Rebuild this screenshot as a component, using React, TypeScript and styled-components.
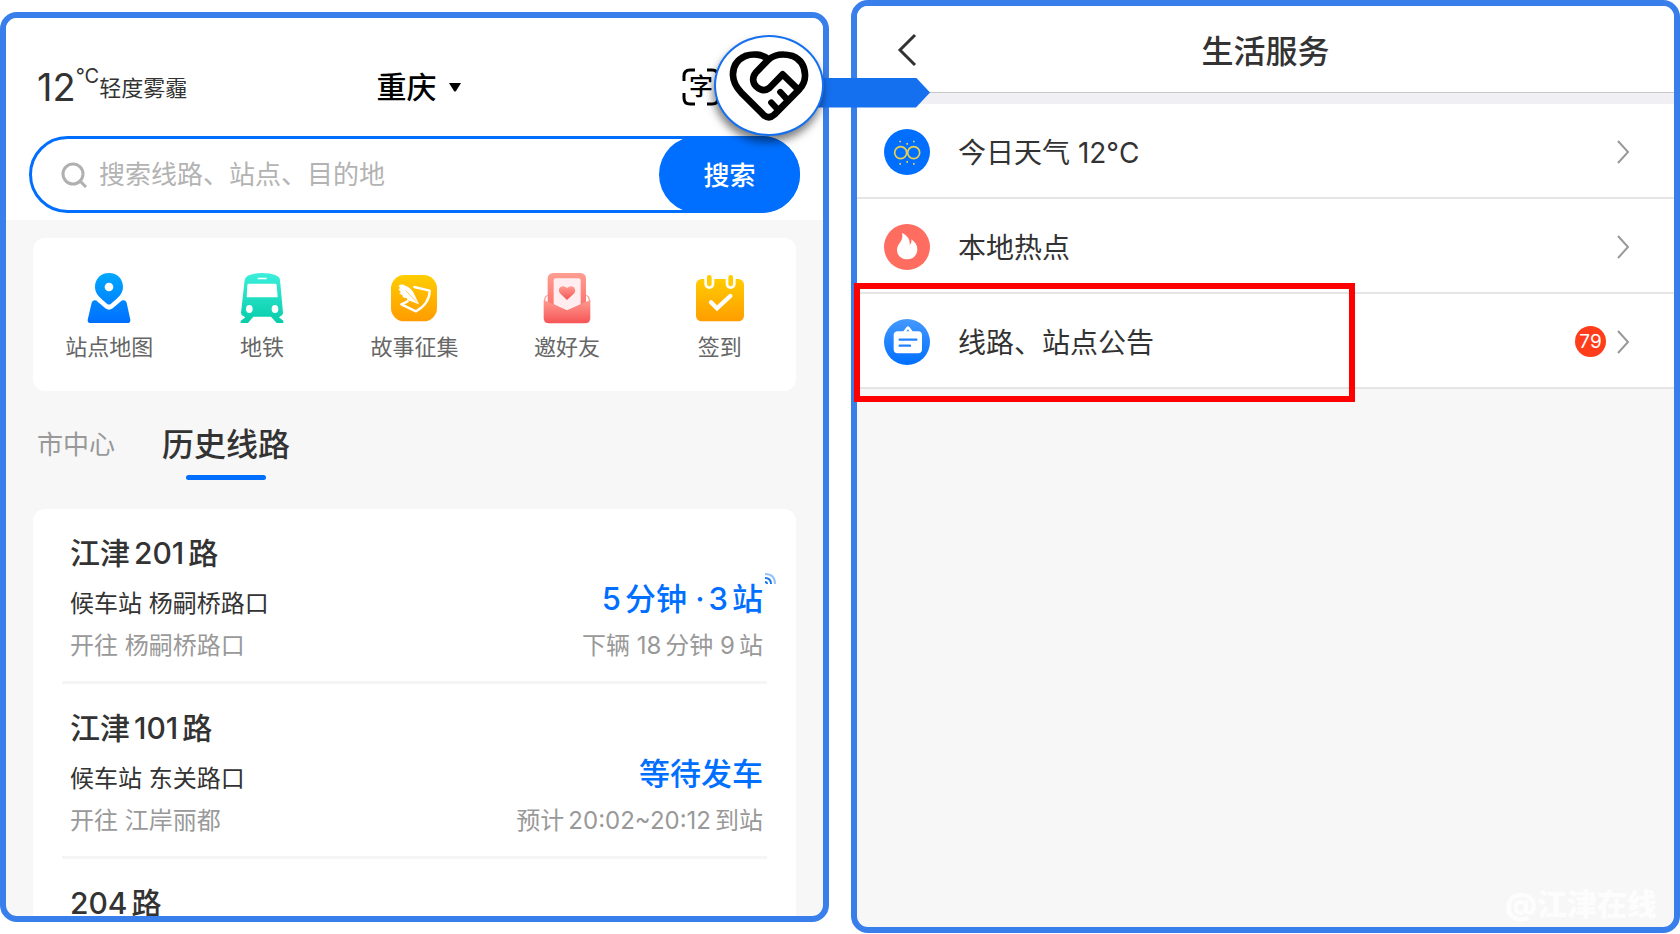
import React from "react";
import styled, { createGlobalStyle } from "styled-components";

const GlobalStyle = createGlobalStyle`
  *, *::before, *::after { box-sizing: border-box; }
  body {
    margin: 0;
    background: #fff;
    color: #333;
    font-family: Inter, "Noto Sans CJK SC", sans-serif;
  }
  button, input { font: inherit; color: inherit; }
  svg { display: block; flex: none; }
`;

const Stage = styled.div`
  display: grid;
  grid-template-columns: minmax(0, 1fr) minmax(0, 1fr);
  column-gap: 22px;
  height: 100vh;
  overflow: hidden;
`;

const HomeColumn = styled.div`
  position: relative;
  z-index: 1;
  min-height: 0;
  padding: 12px 0;
`;

const Phone = styled.section`
  display: flex;
  flex-direction: column;
  height: 100%;
  border: 6px solid #397fec;
  border-radius: 17px;
  background: #f7f7f7;
  overflow: hidden;
`;

const HomeHeader = styled.header`
  flex: none;
  padding: 20px 23px 7px;
  background: #fff;
`;

const TopBar = styled.div`
  display: grid;
  grid-template-columns: 1fr auto 1fr;
  align-items: center;
  height: 98px;
  padding-left: 8px;
`;

const Weather = styled.div`
  display: flex;
  align-items: center;
  line-height: 40px;
`;

const Degrees = styled.span`
  font-size: 38px;
`;

const Unit = styled.sup`
  align-self: flex-start;
  font-size: 20px;
  line-height: 20px;
`;

const Condition = styled.span`
  padding-top: 2px;
  font-size: 22px;
`;

const CityButton = styled.button`
  display: flex;
  align-items: center;
  gap: 12px;
  padding: 0;
  border: 0;
  background: none;
  color: #000;
  font-size: 30px;
  font-weight: 500;
  line-height: 40px;
`;

const ScanButton = styled.button`
  display: grid;
  place-items: center;
  justify-self: end;
  margin-right: 80px;
  padding: 0;
  border: 0;
  background: none;
  color: #000;
  font-size: 24px;
  font-weight: 500;
  line-height: 38px;

  > * { grid-area: 1 / 1; }
`;

const SearchBar = styled.form`
  display: flex;
  align-items: stretch;
  height: 77px;
  border: 3px solid #006fff;
  border-radius: 39px;
`;

const SearchLabel = styled.label`
  display: flex;
  flex: 1;
  min-width: 0;
  align-items: center;
  gap: 12px;
  padding-left: 29px;
`;

const SearchInput = styled.input`
  flex: 1;
  min-width: 0;
  padding: 0;
  border: 0;
  outline: 0;
  background: none;
  font-size: 26px;
  line-height: 40px;

  &::placeholder { color: #b3b3b3; opacity: 1; }
`;

const SearchButton = styled.button`
  width: 141px;
  margin: -3px;
  padding: 0 0 3px;
  border: 0;
  border-radius: 39px;
  background: #006fff;
  color: #fff;
  font-size: 26px;
  font-weight: 500;
`;

const Shortcuts = styled.nav`
  display: grid;
  grid-template-columns: repeat(5, 1fr);
  flex: none;
  height: 153px;
  margin: 18px 27px 0;
  padding-top: 34px;
  border-radius: 12px;
  background: #fff;
`;

const Shortcut = styled.a`
  display: flex;
  flex-direction: column;
  align-items: center;
  gap: 8px;
  color: #666;
  font-size: 22px;
  line-height: 30px;
  text-decoration: none;
`;

const Tabs = styled.div`
  display: flex;
  align-items: center;
  flex: none;
  gap: 47px;
  height: 118px;
  padding: 0 31px 10px;
`;

const Tab = styled.button<{ $active?: boolean }>`
  position: relative;
  padding: 0;
  border: 0;
  background: none;
  color: ${(p) => (p.$active ? "#333" : "#999")};
  font-size: ${(p) => (p.$active ? 32 : 26)}px;
  font-weight: ${(p) => (p.$active ? 500 : 400)};
  line-height: 48px;

  &::after {
    content: "";
    position: absolute;
    display: ${(p) => (p.$active ? "block" : "none")};
    left: 50%;
    bottom: -11px;
    width: 80px;
    height: 5px;
    margin-left: -40px;
    border-radius: 3px;
    background: #006fff;
  }
`;

const RouteList = styled.ul`
  flex: 1;
  min-height: 0;
  margin: 0 27px;
  padding: 0;
  border-radius: 12px 12px 0 0;
  background: #fff;
  overflow: hidden;
  list-style: none;
`;

const RouteItem = styled.li`
  display: flex;
  justify-content: space-between;
  align-items: flex-end;
  height: 175px;
  margin: 0 29px;
  padding: 0 4px 14px 8px;
  border-bottom: 3px solid #f5f5f5;
`;

const RouteSide = styled.div<{ $end?: boolean }>`
  display: flex;
  flex-direction: column;
  align-items: ${(p) => (p.$end ? "flex-end" : "flex-start")};
  white-space: nowrap;
`;

const RouteName = styled.h2`
  margin: 0 0 6px;
  font-size: 30px;
  font-weight: 500;
  line-height: 48px;
`;

const Line = styled.p<{ $muted?: boolean }>`
  margin: 0;
  color: ${(p) => (p.$muted ? "#999" : "#333")};
  font-size: 24px;
  line-height: 42px;
`;

const Arrival = styled.strong`
  position: relative;
  margin-bottom: 2px;
  color: #006fff;
  font-size: 31px;
  font-weight: 500;
  line-height: 48px;
`;

const Num = styled.span<{ $lead: boolean }>`
  margin-left: ${(p) => (p.$lead ? 4 : 0)}px;
  margin-right: 4px;
`;

const Signal = styled.span`
  position: absolute;
  left: 100%;
  top: -2px;
`;

const Callout = styled.div`
  position: absolute;
  top: 35px;
  right: -101px;
  display: flex;
  align-items: center;
`;

const CalloutDisc = styled.div`
  position: relative;
  z-index: 1;
  display: grid;
  place-items: center;
  width: 110px;
  height: 101px;
  border: 2px solid #1570f0;
  border-radius: 50%;
  background: #fff;
  box-shadow: -1px 6px 8px rgba(0, 0, 0, 0.5);
`;

const CalloutArrow = styled.div`
  width: 118px;
  height: 30px;
  margin: 14px 0 0 -12px;
  background: #1570f0;
  clip-path: polygon(0 0, 104px 0, 100% 50%, 104px 100%, 0 100%);
`;

const ServicePanel = styled.section`
  display: flex;
  flex-direction: column;
  margin-bottom: 1px;
  border: 6px solid #397fec;
  border-radius: 17px;
  background: #f7f7f7;
`;

const ServiceHeader = styled.header`
  display: grid;
  grid-template-columns: 60px 1fr 60px;
  align-items: center;
  height: 87px;
  padding-top: 2px;
  border-bottom: 1px solid #c8c8cc;
  border-radius: 11px 11px 0 0;
  background: #fff;
`;

const BackButton = styled.button`
  justify-self: end;
  padding: 0;
  border: 0;
  background: none;
`;

const Title = styled.h1`
  margin: 0;
  padding-top: 3px;
  font-size: 32px;
  font-weight: 500;
  line-height: 48px;
  text-align: center;
`;

const ServiceList = styled.ul`
  margin: 0;
  padding: 0;
  border-top: 11px solid #efeff4;
  list-style: none;
`;

const ServiceRow = styled.li`
  position: relative;
  height: 95px;
  border-bottom: 2px solid #e5e5e5;
  background: #fff;
`;

const ServiceLink = styled.a`
  display: flex;
  align-items: center;
  height: 100%;
  padding: 2px 44px 0 27px;
  color: #333;
  font-size: 28px;
  line-height: 40px;
  text-decoration: none;
`;

const ServiceName = styled.span`
  flex: 1;
  padding: 2px 0 0 28px;
`;

const Badge = styled.span`
  width: 31px;
  margin-right: 11px;
  border-radius: 50%;
  background: #ff3d1a;
  color: #fff;
  font-size: 19px;
  line-height: 31px;
  text-align: center;
`;

const Highlight = styled.div`
  position: absolute;
  top: -11px;
  bottom: -15px;
  left: -3px;
  width: 61.3%;
  border: 6px solid #f00;
  pointer-events: none;
`;

const Watermark = styled.footer`
  margin: auto 17px 3px auto;
  color: #fdfdfd;
  font-size: 30px;
  font-weight: 900;
  line-height: 40px;
`;

function Gradient({ id, from, to }: { id: string; from: string; to: string }) {
  return (
    <linearGradient id={id} x1="0" y1="0" x2="0" y2="1">
      <stop offset="0" stopColor={from} />
      <stop offset="1" stopColor={to} />
    </linearGradient>
  );
}

const MapIcon = () => (
  <svg width="48" height="52" viewBox="0 0 144 156">
    <defs>
      <linearGradient id="map" gradientUnits="userSpaceOnUse" x1="0" y1="3" x2="0" y2="153">
        <stop offset="0" stopColor="#00a8ff" />
        <stop offset="1" stopColor="#006fff" />
      </linearGradient>
    </defs>
    <path fill="url(#map)" fillRule="evenodd" d="M72 3C47 3 30 21 30 45C30 68 48 79 66 95Q72 100 78 95C96 79 114 68 114 45C114 21 97 3 72 3ZM72 32A13 13 0 1 1 72 58A13 13 0 1 1 72 32Z" />
    <path fill="url(#map)" d="M28 85Q33 84 38 89L61 109Q72 117 83 109L106 89Q111 84 117 85Q123 86 125 92L136 143Q137 153 127 153H17Q7 153 8 143L20 92Q22 86 28 85Z" />
  </svg>
);

const TrainIcon = () => (
  <svg width="48" height="52" viewBox="0 0 144 156">
    <defs><Gradient id="train" from="#3cefdc" to="#07cca9" /></defs>
    <path fill="url(#train)" fillRule="evenodd" d="M20 24Q22 4 72 3Q124 4 126 24L135 122Q135 130 127 133L123 136L136 146V153H116L99 134H46L30 153H8V147L22 136L17 133Q9 130 9 122ZM59 17V22H86V17ZM32 35Q28 35 28 40L26 76H119L116 40Q116 35 112 35ZM34 99A10 12 0 1 0 34 123A10 12 0 1 0 34 99ZM111 99A10 12 0 1 0 111 123A10 12 0 1 0 111 99Z" />
  </svg>
);

const StoryIcon = () => (
  <svg width="48" height="52" viewBox="0 0 144 156">
    <defs><Gradient id="story" from="#ffcd00" to="#ff9b00" /></defs>
    <rect x="3" y="9" width="138" height="139" rx="40" fill="url(#story)" />
    <path d="M73 45L119 56Q119 94 78 118L34 97L53 88" fill="none" stroke="#fff" strokeWidth="7" strokeLinejoin="round" strokeLinecap="round" />
    <path fill="#fff" d="M26 41Q35 34 46 41Q64 48 71 63Q77 75 87 97Q69 90 52 84L51 79L38 76L39 71L28 64L33 61L25 52L30 49Z" />
    <path d="M46 55L80 90" stroke="#ffb800" strokeWidth="2" />
  </svg>
);

const InviteIcon = () => (
  <svg width="48" height="52" viewBox="0 0 144 156">
    <defs>
      <Gradient id="invite" from="#ff9d91" to="#fb6c69" />
      <Gradient id="envelope" from="#ff9b90" to="#f65456" />
    </defs>
    <path d="M14 70Q5 72 5 84V110M130 70Q139 72 139 84V110" fill="none" stroke="#fb7b76" strokeWidth="3" />
    <rect x="14" y="3" width="115" height="120" rx="16" fill="url(#invite)" />
    <path d="M32 25Q32 19 38 19H107Q113 19 113 25V97L72 117L32 97Z" fill="#ffedf0" />
    <path d="M72 84L51 64Q45 55 50 47Q61 38 72 48Q84 38 94 47Q99 55 94 64Z" fill="url(#envelope)" />
    <path d="M2 84L72 115L142 84V138Q142 154 126 154H18Q2 154 2 138Z" fill="url(#envelope)" />
  </svg>
);

const CheckInIcon = () => (
  <svg width="50" height="52" viewBox="0 0 150 156">
    <defs><Gradient id="sign" from="#ffcb00" to="#ff9d00" /></defs>
    <rect x="3" y="21" width="144" height="127" rx="17" fill="url(#sign)" />
    <rect x="32" y="5" width="22" height="42" rx="11" fill="#fc0" stroke="#fff" strokeWidth="8" />
    <rect x="96" y="5" width="22" height="42" rx="11" fill="#fc0" stroke="#fff" strokeWidth="8" />
    <path d="M48 91L66 109L106 72" fill="none" stroke="#fff" strokeWidth="13" strokeLinecap="round" />
  </svg>
);

const SearchIcon = () => (
  <svg width="26" height="26" viewBox="0 0 26 26" fill="none" stroke="#b0b0b0" strokeWidth="3">
    <circle cx="12" cy="12" r="10" />
    <path d="M18 18L25 25" />
  </svg>
);

const ScanFrame = () => (
  <svg width="38" height="38" viewBox="0 0 38 38" fill="none" stroke="#000" strokeWidth="3">
    <path d="M2 13V8Q2 2 8 2H13M25 2H30Q36 2 36 8V13M36 25V30Q36 36 30 36H25M13 36H8Q2 36 2 30V25" />
  </svg>
);

const HandshakeHeart = () => (
  <svg width="80" height="72" viewBox="161 60 240 216" preserveAspectRatio="none" fill="none" stroke="#000" strokeWidth="20" strokeLinejoin="round" strokeLinecap="round">
    <path d="M280 88C260 72 232 70 210 78C184 90 172 110 173 136C174 160 185 174 197 187L264 254Q281 269 297 254L372 178C384 165 390 152 389 134C388 106 374 87 352 78C324 70 300 72 280 88L242 127C230 142 231 158 243 170C256 182 270 183 282 174L322 133L362 172" />
    <path d="M315 186L333 206M288 218L305 236" strokeWidth="19" />
  </svg>
);

const SignalIcon = () => (
  <svg width="14" height="12" viewBox="0 0 14 12" fill="none" stroke="#1a78ea" strokeWidth="2">
    <path d="M2 9Q4 9 4 11" />
    <path d="M2 5Q8 5 8 11" />
    <path d="M2 1Q12 1 12 11" opacity="0.45" />
  </svg>
);

const Chevron = () => (
  <svg width="13" height="24" viewBox="0 0 13 24" fill="none" stroke="#999" strokeWidth="2">
    <path d="M1 1L11 12L1 23" />
  </svg>
);

const HazeIcon = () => (
  <svg width="46" height="46" viewBox="0 0 138 138">
    <circle cx="69" cy="69" r="69" fill="#006fff" />
    <g fill="none" stroke="#e8d050" strokeWidth="5">
      <circle cx="50" cy="71" r="18" />
      <circle cx="89" cy="71" r="18" />
    </g>
    <path d="M46 35h5v5h-5zM87 35h5v5h-5zM67 42h5v5h-5zM46 102h5v5h-5zM87 102h5v5h-5zM67 96h5v5h-5z" fill="#e8d050" />
  </svg>
);

const FireIcon = () => (
  <svg width="46" height="46" viewBox="0 0 138 138">
    <circle cx="69" cy="69" r="69" fill="#ff6c60" />
    <path d="M54 27C69 34 79 45 77 63C82 60 83 51 82 46C94 54 100 64 100 76C100 94 87 106 69 106C51 106 39 93 39 77C39 57 60 53 54 27Z" fill="#fff" />
  </svg>
);

const NoticeIcon = () => (
  <svg width="46" height="46" viewBox="0 0 138 138">
    <defs><Gradient id="notice" from="#4598ff" to="#006fff" /></defs>
    <circle cx="69" cy="69" r="69" fill="url(#notice)" />
    <path d="M58 37L68 24Q72 20 76 24L86 37H103Q114 38 114 49V91Q114 103 102 103H41Q29 103 29 91V49Q29 38 41 37ZM67 37H76L72 31Z" fill="#fff" fillRule="evenodd" />
    <path d="M47 62H97M47 80H78" stroke="#2381ff" strokeWidth="7" strokeLinecap="round" />
  </svg>
);

// Sets numbers off from the Chinese characters beside them with a narrow gap.
function Spaced({ text }: { text: string }) {
  const parts = text.split(/([\d:~]+)/);
  return (
    <>
      {parts.map((part, i) =>
        i % 2 ? (
          <Num key={i} $lead={parts[i - 1] !== "" && !parts[i - 1].endsWith(" ")}>{part}</Num>
        ) : (
          part
        )
      )}
    </>
  );
}

const shortcuts = [
  { name: "站点地图", Icon: MapIcon },
  { name: "地铁", Icon: TrainIcon },
  { name: "故事征集", Icon: StoryIcon },
  { name: "邀好友", Icon: InviteIcon },
  { name: "签到", Icon: CheckInIcon },
];

const routes = [
  { name: "江津201路", stop: "杨嗣桥路口", to: "杨嗣桥路口", arrival: "5分钟 ·3站", next: "下辆 18分钟 9站", live: true },
  { name: "江津101路", stop: "东关路口", to: "江岸丽都", arrival: "等待发车", next: "预计20:02~20:12到站", live: false },
  { name: "204路", stop: "", to: "", arrival: "", next: "", live: false },
];

const services = [
  { name: "今日天气 12°C", Icon: HazeIcon },
  { name: "本地热点", Icon: FireIcon },
  { name: "线路、站点公告", Icon: NoticeIcon, count: 79, marked: true },
];

export default function App() {
  return (
    <>
      <GlobalStyle />
      <Stage>
        <HomeColumn>
          <Phone>
            <HomeHeader>
              <TopBar>
                <Weather>
                  <Degrees>12</Degrees>
                  <Unit>°C</Unit>
                  <Condition>轻度雾霾</Condition>
                </Weather>
                <CityButton type="button">
                  重庆
                  <svg width="12" height="9" viewBox="0 0 12 9"><path d="M0 0H12L7 8Q6 9 5 8Z" /></svg>
                </CityButton>
                <ScanButton type="button">
                  <ScanFrame />
                  <span>字</span>
                </ScanButton>
              </TopBar>
              <SearchBar onSubmit={(e) => e.preventDefault()}>
                <SearchLabel>
                  <SearchIcon />
                  <SearchInput aria-label="搜索" placeholder="搜索线路、站点、目的地" />
                </SearchLabel>
                <SearchButton type="submit">搜索</SearchButton>
              </SearchBar>
            </HomeHeader>
            <Shortcuts>
              {shortcuts.map(({ name, Icon }) => (
                <Shortcut href="#" key={name}>
                  <Icon />
                  {name}
                </Shortcut>
              ))}
            </Shortcuts>
            <Tabs>
              <Tab type="button">市中心</Tab>
              <Tab type="button" $active>历史线路</Tab>
            </Tabs>
            <RouteList>
              {routes.map((r) => (
                <RouteItem key={r.name}>
                  <RouteSide>
                    <RouteName><Spaced text={r.name} /></RouteName>
                    <Line>{r.stop ? `候车站 ${r.stop}` : "\u00a0"}</Line>
                    <Line $muted>{r.to ? `开往 ${r.to}` : "\u00a0"}</Line>
                  </RouteSide>
                  <RouteSide $end>
                    <Arrival>
                      <Spaced text={r.arrival} />
                      {r.live && <Signal><SignalIcon /></Signal>}
                    </Arrival>
                    <Line $muted><Spaced text={r.next} /></Line>
                  </RouteSide>
                </RouteItem>
              ))}
            </RouteList>
          </Phone>
          <Callout>
            <CalloutDisc><HandshakeHeart /></CalloutDisc>
            <CalloutArrow />
          </Callout>
        </HomeColumn>
        <ServicePanel>
          <ServiceHeader>
            <BackButton type="button" aria-label="返回">
              <svg width="20" height="34" viewBox="0 0 20 34" fill="none" stroke="#333" strokeWidth="3">
                <path d="M18 2L3 17L18 32" />
              </svg>
            </BackButton>
            <Title>生活服务</Title>
          </ServiceHeader>
          <ServiceList>
            {services.map(({ name, Icon, count, marked }) => (
              <ServiceRow key={name}>
                <ServiceLink href="#">
                  <Icon />
                  <ServiceName>{name}</ServiceName>
                  {count && <Badge>{count}</Badge>}
                  <Chevron />
                </ServiceLink>
                {marked && <Highlight />}
              </ServiceRow>
            ))}
          </ServiceList>
          <Watermark>@江津在线</Watermark>
        </ServicePanel>
      </Stage>
    </>
  );
}
